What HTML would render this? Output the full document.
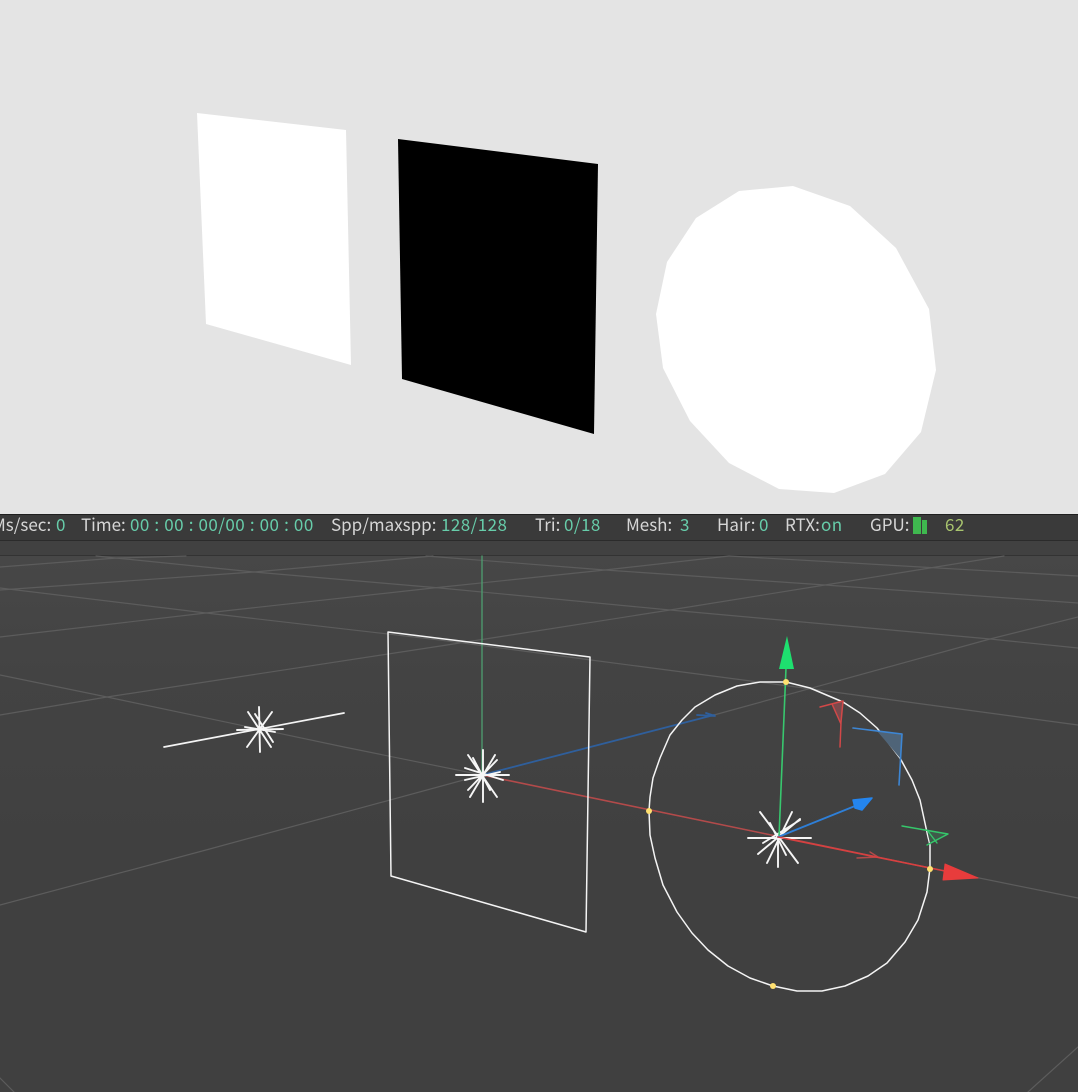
<!DOCTYPE html>
<html><head><meta charset="utf-8"><style>
html,body{margin:0;padding:0;background:#404040}
#r{position:relative;width:1078px;height:1092px;overflow:hidden;background:#404040}
#t{position:absolute;left:0;top:0;width:1078px;height:514px;background:#e4e4e4}
#b{position:absolute;left:0;top:514px;width:1078px;height:27px;background:#3a3a3a;border-top:1px solid #1f1f1f;box-sizing:border-box;border-bottom:1px solid #2b2b2b}
#c{position:absolute;left:0;top:541px;width:1078px;height:14px;background:#414141;border-bottom:1px solid #333}
#v{position:absolute;left:0;top:556px;width:1078px;height:536px;background:linear-gradient(#474747,#434343 120px,#404040 300px)}
svg{position:absolute;left:0;top:0;filter:blur(.3px)}
span{position:absolute;top:512px;font:17px/24px "Noto Sans CJK JP","Liberation Sans",sans-serif;color:#d6d6d6;white-space:pre}
span.g{color:#67cdaa;letter-spacing:.45px}
</style></head><body><div id="r">
<div id="t"></div><div id="b"></div><div id="c"></div><div id="v"></div>
<svg width="1078" height="1092" viewBox="0 0 1078 1092" fill="none" stroke-linejoin="round" stroke-linecap="round">
<polygon points="197,113 346,130 351,365 206,324" fill="#fff"/>
<polygon points="398,139 598,164 594,434 402,379" fill="#000"/>
<polygon points="739,191 793,186 850,206 896,248 929,309 936,370 921,432 885,474 834,493 779,489 729,463 690,421 663,368 656,314 667,262 696,218" fill="#fff"/>
<g stroke="#5c5c5c" stroke-width="1.2">
<path d="M96 556L254 572L440 588L670 610L990 639L1078 648"/>
<path d="M426 556L605 570L825 585L1078 603"/>
<path d="M729 556L1078 576"/>
<path d="M0 588L206 613L440 640L591 660L804 688L1078 725"/>
<path d="M0 675L107 697L344 747L482 775L930 868L1078 898"/>
<path d="M0 567L117 558L186 556"/>
<path d="M0 590L254 572L433 556"/>
<path d="M0 637L206 613L433 588L605 570L729 556"/>
<path d="M0 715L107 697L447 645L670 610L825 585L1004 556"/>
<path d="M0 905L206 850L482 775L714 715L990 639L1078 617"/>
<path d="M1028 1092L1078 1047"/>
<path d="M0 1078L14 1092"/>
</g>
<path d="M482 556V775" stroke="#4e9e70" stroke-width="1.3"/>
<path d="M482 775L714 715M697 715L715 716L706 713" stroke="#2f5f9c" stroke-width="1.8"/>
<path d="M482 775L930 868" stroke="#b34a4a" stroke-width="1.5"/>
<path d="M857 858L878 857L870 852" stroke="#b34a4a" stroke-width="1.4"/>
<path d="M388 632L590 657L586 932L391 876Z" stroke="#f4f4f4" stroke-width="1.5"/>
<path d="M164 747L344 713" stroke="#f4f4f4" stroke-width="1.7"/>
<polygon points="760,682 786,682 810,688 843,702 860,713 877,728 900,758 912,780 920,800 928,837 930,845 930,868 927,892 918,920 905,942 887,963 868,976 845,986 822,991 797,991 773,986 750,978 728,966 708,950 692,933 677,912 663,885 655,858 650,835 649,811 650,797 653,778 660,758 670,735 682,720 695,707 715,695 737,686" stroke="#f4f4f4" stroke-width="1.5"/>
<g stroke="#f6f6f6" stroke-width="1.9">
<path d="M259 707L260 752M237 730L283 729M248 712L271 747M272 712L247 747M245 727L275 732M255 714L273 742"/>
<path d="M483 750V802M456 775H509M468 755L497 797M495 755L470 797M468 790L497 760M465 780L500 772M465 768L503 780M473 758L490 790"/>
<path d="M760 812L798 863M792 812L767 863M800 819L758 854M748 838H811M778 837V867M763 843L800 820M770 823L786 855"/>
</g>
<polygon points="832,704 843,701 841,722" fill="#7a4a4d"/>
<path d="M820 707L843 701L841 722L840 747M832 704L841 724" stroke="#d24848" stroke-width="1.5"/>
<polygon points="877,731 902,734 900,758" fill="#4f6478"/>
<path d="M853 728L902 734L899 785" stroke="#3d86d4" stroke-width="1.6"/>
<polygon points="927,830 948,834 930,843" fill="#3f5a4a"/>
<path d="M902 826L948 834L927 845M927 830L937 843" stroke="#35c76b" stroke-width="1.4"/>
<path d="M779 837L786 668" stroke="#38c76e" stroke-width="1.6"/>
<polygon points="787,636 794,669 779,669" fill="#1ee06f"/>
<path d="M778 837L855 806" stroke="#2e7fd8" stroke-width="1.8"/>
<path d="M853 800L872 798L862 810L855 808Z" fill="#2485ee" stroke="#2485ee" stroke-width="1.5"/>
<path d="M778 837L945 871" stroke="#d84040" stroke-width="1.6"/>
<polygon points="945,864 978,878 943,880" fill="#e83c3c" stroke="#e83c3c" stroke-width="1"/>
<g fill="#ffe070"><circle cx="786" cy="682" r="3"/><circle cx="649" cy="811" r="3"/><circle cx="930" cy="869" r="3"/><circle cx="773" cy="986" r="3"/></g>
<rect x="913" y="517" width="8" height="17" fill="#3fb84f"/><rect x="922" y="520" width="5" height="14" fill="#3fb84f"/>
</svg>
<span style="left:-8px">Ms/sec:</span><span class="g" style="left:56px">0</span>
<span style="left:81px">Time:</span><span class="g" style="left:130px;word-spacing:.4px">00 : 00 : 00/00 : 00 : 00</span>
<span style="left:331px">Spp/maxspp:</span><span class="g" style="left:441px">128/128</span>
<span style="left:535px">Tri:</span><span class="g" style="left:564px">0/18</span>
<span style="left:626px">Mesh:</span><span class="g" style="left:680px">3</span>
<span style="left:717px">Hair:</span><span class="g" style="left:759px">0</span>
<span style="left:785px">RTX:</span><span class="g" style="left:821px">on</span>
<span style="left:870px">GPU:</span><span style="left:945px;color:#a8c46e;letter-spacing:.45px">62</span>
</div></body></html>
